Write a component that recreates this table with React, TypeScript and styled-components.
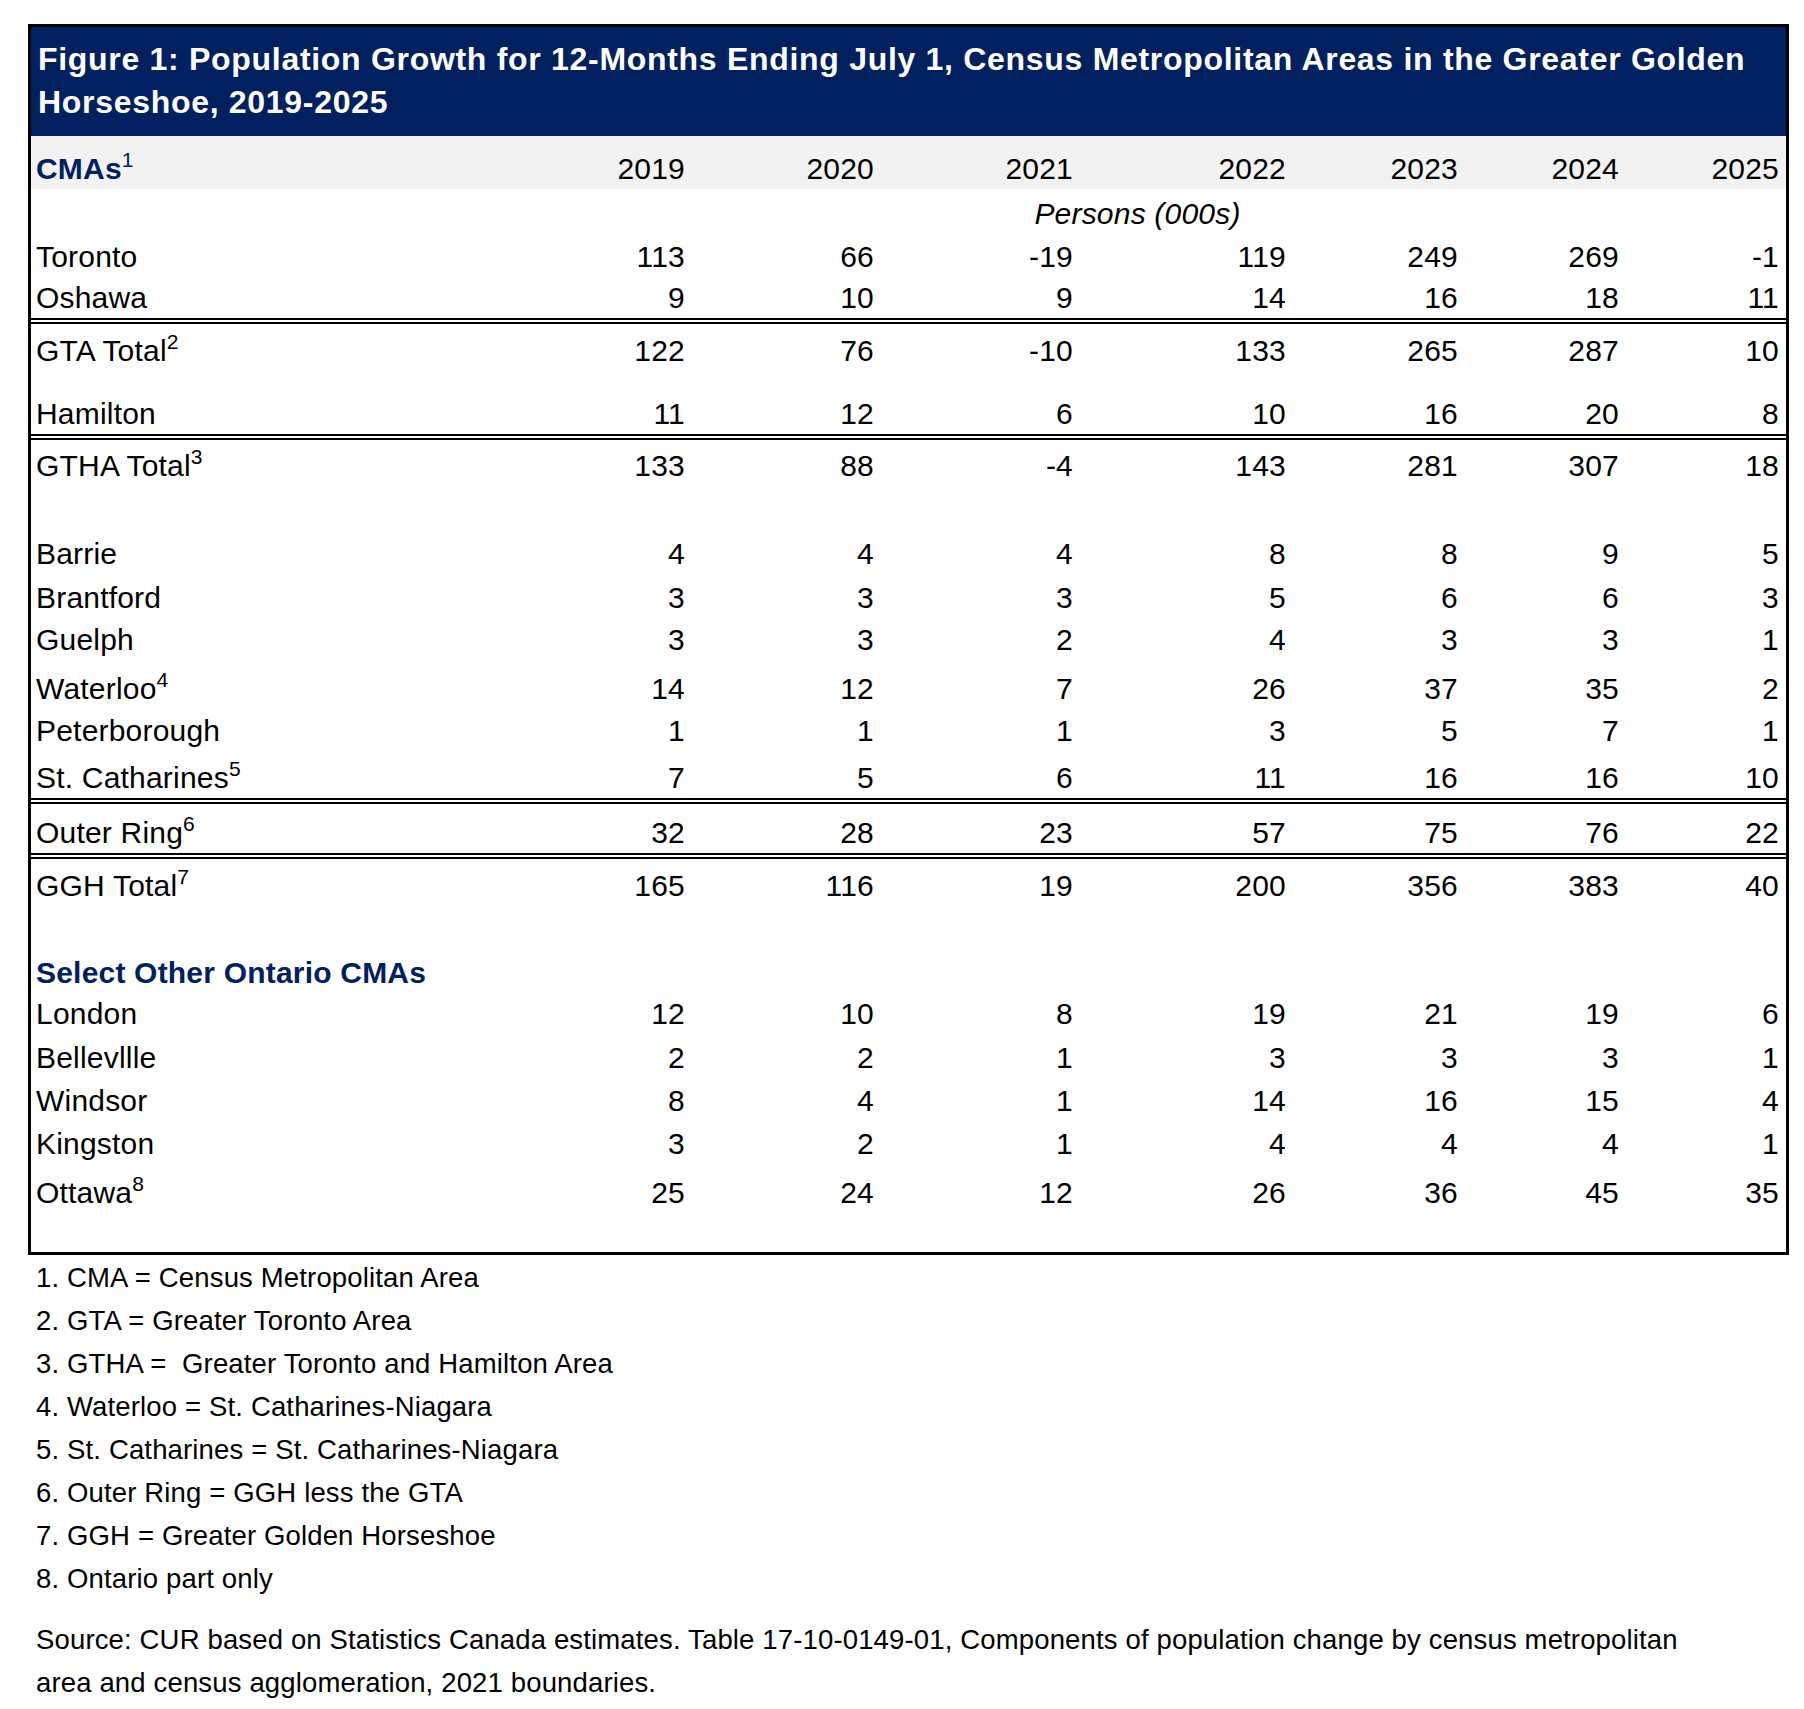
import React from "react";
import styled, { createGlobalStyle } from "styled-components";

const GlobalStyle = createGlobalStyle`
  html, body { margin: 0; padding: 0; background: #ffffff; }
  body {
    font-family: "Liberation Sans", Arial, Helvetica, sans-serif;
    color: #000000;
  }
`;

const NAVY = "#002060";
const COLS = "465px 189px 189px 199px 213px 172px 161px 160px";

const Page = styled.main`
  width: 1761px;
  padding: 24px 0 0 28px;
`;

const Frame = styled.section`
  border: 3px solid #000;
  display: flex;
  flex-direction: column;
`;

const TitleBar = styled.h1`
  margin: 0;
  box-sizing: border-box;
  height: 109px;
  padding: 11px 12px 0 7px;
  background: ${NAVY};
  color: #ffffff;
  font-size: 32px;
  font-weight: 700;
  line-height: 43px;
  letter-spacing: 0.7px;
`;

const Row = styled.div<{ $h: number; $shade?: boolean }>`
  display: grid;
  grid-template-columns: ${COLS};
  box-sizing: border-box;
  height: ${(p) => p.$h}px;
  align-items: end;
  padding-bottom: 4px;
  font-size: 30px;
  line-height: 33px;
  letter-spacing: 0.2px;
  background: ${(p) => (p.$shade ? "#f2f2f2" : "transparent")};
`;

const Label = styled.div<{ $heading?: boolean }>`
  padding-left: 5px;
  white-space: nowrap;
  font-weight: ${(p) => (p.$heading ? 700 : 400)};
  color: ${(p) => (p.$heading ? NAVY : "#000")};
`;

const Num = styled.div`
  text-align: right;
  white-space: nowrap;
`;

const Unit = styled.div`
  grid-column: 2 / -1;
  text-align: center;
  font-style: italic;
`;

const Sup = styled.span`
  font-size: 21px;
  font-weight: 400;
  line-height: 0;
  vertical-align: 12px;
  letter-spacing: 0;
`;

const DoubleRule = styled.div`
  height: 2px;
  border-top: 2px solid #000;
  border-bottom: 2px solid #000;
`;

const Spacer = styled.div<{ $h: number }>`
  height: ${(p) => p.$h}px;
`;

const Notes = styled.ol`
  list-style: none;
  margin: 0;
  padding: 1px 0 0 8px;
  font-size: 27.5px;
  line-height: 43px;
  letter-spacing: 0.15px;
`;

const Note = styled.li`
  white-space: pre;
`;

const Source = styled.p`
  margin: 18px 0 0 8px;
  font-size: 27.5px;
  line-height: 43px;
  letter-spacing: 0.15px;
`;

type Item =
  | { kind: "data"; label: string; sup?: string; vals: number[]; h: number }
  | { kind: "heading"; label: string; h: number }
  | { kind: "rule" }
  | { kind: "blank"; h: number };

const YEARS = ["2019", "2020", "2021", "2022", "2023", "2024", "2025"];

const items: Item[] = [
  { kind: "data", label: "Toronto", vals: [113, 66, -19, 119, 249, 269, -1], h: 43 },
  { kind: "data", label: "Oshawa", vals: [9, 10, 9, 14, 16, 18, 11], h: 41 },
  { kind: "rule" },
  { kind: "data", label: "GTA Total", sup: "2", vals: [122, 76, -10, 133, 265, 287, 10], h: 47 },
  { kind: "data", label: "Hamilton", vals: [11, 12, 6, 10, 16, 20, 8], h: 63 },
  { kind: "rule" },
  { kind: "data", label: "GTHA Total", sup: "3", vals: [133, 88, -4, 143, 281, 307, 18], h: 46 },
  { kind: "blank", h: 45 },
  { kind: "data", label: "Barrie", vals: [4, 4, 4, 8, 8, 9, 5], h: 43 },
  { kind: "data", label: "Brantford", vals: [3, 3, 3, 5, 6, 6, 3], h: 44 },
  { kind: "data", label: "Guelph", vals: [3, 3, 2, 4, 3, 3, 1], h: 42 },
  { kind: "data", label: "Waterloo", sup: "4", vals: [14, 12, 7, 26, 37, 35, 2], h: 49 },
  { kind: "data", label: "Peterborough", vals: [1, 1, 1, 3, 5, 7, 1], h: 42 },
  { kind: "data", label: "St. Catharines", sup: "5", vals: [7, 5, 6, 11, 16, 16, 10], h: 47 },
  { kind: "rule" },
  { kind: "data", label: "Outer Ring", sup: "6", vals: [32, 28, 23, 57, 75, 76, 22], h: 49 },
  { kind: "rule" },
  { kind: "data", label: "GGH Total", sup: "7", vals: [165, 116, 19, 200, 356, 383, 40], h: 47 },
  { kind: "blank", h: 44 },
  { kind: "heading", label: "Select Other Ontario CMAs", h: 43 },
  { kind: "data", label: "London", vals: [12, 10, 8, 19, 21, 19, 6], h: 41 },
  { kind: "data", label: "Bellevllle", vals: [2, 2, 1, 3, 3, 3, 1], h: 44 },
  { kind: "data", label: "Windsor", vals: [8, 4, 1, 14, 16, 15, 4], h: 43 },
  { kind: "data", label: "Kingston", vals: [3, 2, 1, 4, 4, 4, 1], h: 43 },
  { kind: "data", label: "Ottawa", sup: "8", vals: [25, 24, 12, 26, 36, 45, 35], h: 49 },
  { kind: "blank", h: 39 },
];

const notes = [
  "1. CMA = Census Metropolitan Area",
  "2. GTA = Greater Toronto Area",
  "3. GTHA =  Greater Toronto and Hamilton Area",
  "4. Waterloo = St. Catharines-Niagara",
  "5. St. Catharines = St. Catharines-Niagara",
  "6. Outer Ring = GGH less the GTA",
  "7. GGH = Greater Golden Horseshoe",
  "8. Ontario part only",
];

function renderItem(item: Item, i: number) {
  switch (item.kind) {
    case "rule":
      return <DoubleRule key={i} />;
    case "blank":
      return <Spacer key={i} $h={item.h} />;
    case "heading":
      return (
        <Row key={i} $h={item.h}>
          <Label $heading>{item.label}</Label>
        </Row>
      );
    case "data":
      return (
        <Row key={i} $h={item.h}>
          <Label>
            {item.label}
            {item.sup && <Sup>{item.sup}</Sup>}
          </Label>
          {item.vals.map((v, j) => (
            <Num key={j}>{v}</Num>
          ))}
        </Row>
      );
  }
}

export default function App() {
  return (
    <>
      <GlobalStyle />
      <Page>
        <Frame>
          <TitleBar>
            Figure 1: Population Growth for 12-Months Ending July 1, Census Metropolitan Areas in the Greater Golden
            Horseshoe, 2019-2025
          </TitleBar>
          <Row $h={53} $shade>
            <Label $heading>
              CMAs<Sup>1</Sup>
            </Label>
            {YEARS.map((y) => (
              <Num key={y}>{y}</Num>
            ))}
          </Row>
          <Row $h={45}>
            <Unit>Persons (000s)</Unit>
          </Row>
          {items.map(renderItem)}
        </Frame>
        <Notes>
          {notes.map((n) => (
            <Note key={n}>{n}</Note>
          ))}
        </Notes>
        <Source>
          Source: CUR based on Statistics Canada estimates. Table 17-10-0149-01, Components of population change by census
          metropolitan
          <br />
          area and census agglomeration, 2021 boundaries.
        </Source>
      </Page>
    </>
  );
}
